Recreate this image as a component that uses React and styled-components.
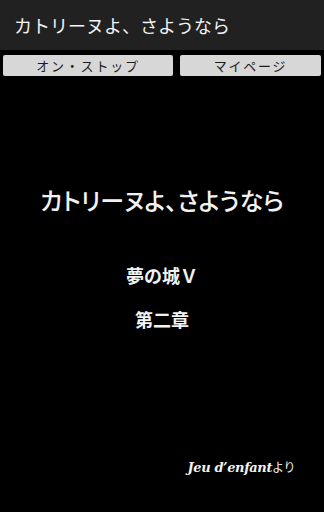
import React from 'react';
import styled, { createGlobalStyle } from 'styled-components';

const GlobalStyle = createGlobalStyle`
  html, body {
    margin: 0;
    padding: 0;
    background: #000;
  }
  body {
    font-family: "Noto Sans CJK JP", "Noto Sans", sans-serif;
  }
`;

const Screen = styled.div`
  width: 324px;
  height: 512px;
  display: flex;
  flex-direction: column;
  background: #000;
  color: #f2f2f2;
  overflow: hidden;
`;

const TitleBar = styled.header`
  height: 50px;
  display: flex;
  align-items: center;
  padding: 0 14px;
  background: #212121;
  font-size: 18px;
  color: #f4f4f4;
  box-sizing: border-box;
`;

const ButtonRow = styled.div`
  display: flex;
  gap: 7px;
  padding: 5px 3px 0 3px;
`;

const MenuButton = styled.button`
  flex: ${(p) => p.grow} 1 0;
  height: 21px;
  border: none;
  border-radius: 2px;
  background: #d7d7d7;
  color: #1c1c1c;
  font-family: "Noto Sans CJK JP", sans-serif;
  font-size: 13px;
  letter-spacing: 1.8px;
  line-height: 21px;
  padding: 0;
`;

const Content = styled.main`
  flex: 1;
  display: flex;
  flex-direction: column;
  align-items: center;
  padding-top: 109px;
`;

const BigTitle = styled.h1`
  margin: 0;
  font-size: 24px;
  font-weight: 500;
  line-height: 30px;
  font-feature-settings: "palt";
`;

const SubTitle = styled.h2`
  margin: 0;
  font-size: 18px;
  font-weight: 700;
  line-height: 26px;
  margin-top: ${(p) => p.top}px;
`;

const Credit = styled.div`
  margin-top: auto;
  align-self: flex-end;
  margin-right: 29px;
  margin-bottom: 37px;
  font-family: "DejaVu Serif", "Noto Sans CJK JP", serif;
  font-style: italic;
  font-weight: 700;
  font-size: 13px;
  letter-spacing: -0.4px;

  span {
    font-family: "Noto Sans CJK JP", sans-serif;
    font-style: normal;
    font-weight: 400;
    font-size: 12px;
  }
`;

const App = () => (
  <Screen>
    <GlobalStyle />
    <TitleBar>カトリーヌよ、さようなら</TitleBar>
    <ButtonRow>
      <MenuButton grow={170}>オン・ストップ</MenuButton>
      <MenuButton grow={141}>マイページ</MenuButton>
    </ButtonRow>
    <Content>
      <BigTitle>カトリーヌよ、さようなら</BigTitle>
      <SubTitle top={47}>夢の城Ｖ</SubTitle>
      <SubTitle top={18}>第二章</SubTitle>
      <Credit>
        Jeu d’enfant<span>より</span>
      </Credit>
    </Content>
  </Screen>
);

export default App;
